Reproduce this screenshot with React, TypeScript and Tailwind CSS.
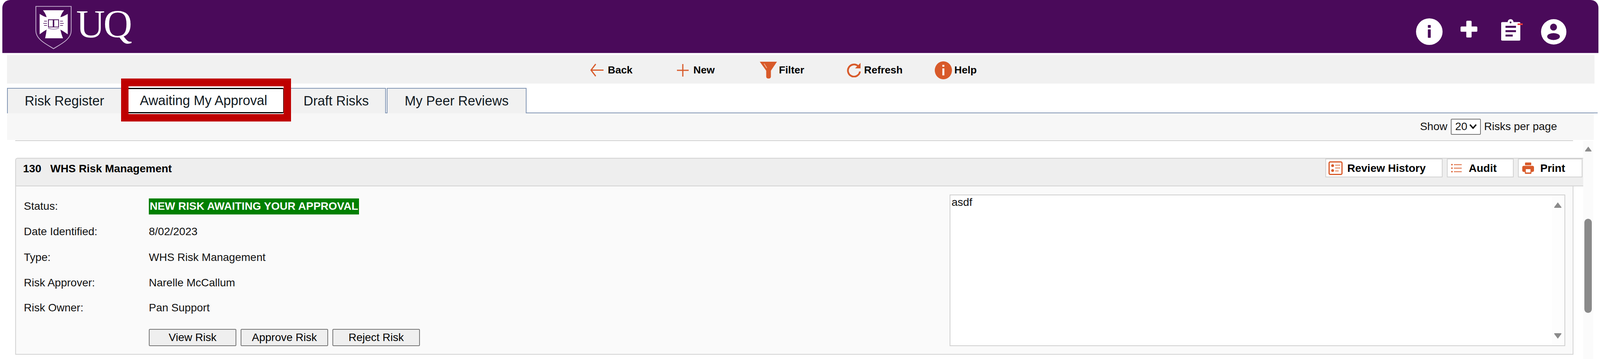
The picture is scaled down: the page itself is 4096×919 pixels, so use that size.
import type { ReactNode } from "react";

const ORANGE = "#d85a2a";
const PURPLE = "#4a0a5a";

// UQ crest: shield outline, cross and open book
function Crest() {
  return (
    <svg viewBox="0 0 100 119" className="w-[94px] h-[111px]">
      <path d="M1.5 1.5H98.5V68C98.5 92 70 105 50 117.5C30 105 1.5 92 1.5 68Z" fill="none" stroke="#cdb9d6" strokeWidth="2" />
      <path
        d="M21 12H79Q71 22 69 31Q78 29 89 22V78Q78 70 69 65Q71 76 76 89H27Q30 76 31 65Q22 70 12 78V22Q22 29 31 31Q29 22 21 12Z"
        fill="#fff"
      />
      <path d="M36 38H49V58H36ZM51 38H64V58H51Z" fill="#fff" stroke={PURPLE} strokeWidth="2" />
      <path d="M35 61Q50 67 65 61" fill="none" stroke="#a98bb6" strokeWidth="2.5" />
      <path d="M24 42H32M22 48H32M24 54H32M68 42H76M68 48H78M68 54H76" stroke={PURPLE} strokeWidth="1.6" />
    </svg>
  );
}

function InfoIcon() {
  return (
    <svg viewBox="0 0 24 24" className="w-[68px] h-[68px] mt-[47px]">
      <circle cx="12" cy="12" r="12" fill="#fff" />
      <rect x="10.7" y="6" width="2.6" height="2.6" rx="0.5" fill={PURPLE} />
      <rect x="10.7" y="10" width="2.6" height="7.6" rx="0.4" fill={PURPLE} />
    </svg>
  );
}

function PlusIcon() {
  return (
    <svg viewBox="0 0 24 24" className="w-[43px] h-[43px] mt-[53px]">
      <rect x="8.2" y="0" width="7.6" height="24" rx="1.6" fill="#fff" />
      <rect x="0" y="8.2" width="24" height="7.6" rx="1.6" fill="#fff" />
    </svg>
  );
}

function ClipboardIcon() {
  return (
    <div className="relative w-[49px] h-[55px] mt-[49px]">
      <svg viewBox="0 0 53 59" className="w-[49px] h-[55px]" preserveAspectRatio="none">
        <rect x="0" y="8" width="53" height="51" rx="3" fill="#fff" />
        <circle cx="26" cy="8" r="8" fill="#fff" />
        <circle cx="26" cy="9" r="2.6" fill={PURPLE} />
        <path d="M12 21H41M12 33H41M12 45H32" stroke={PURPLE} strokeWidth="5.5" />
      </svg>
      <div className="absolute left-[42px] top-[11px] w-[13px] h-[4px] bg-[#f03a3a]" />
    </div>
  );
}

function UserIcon() {
  return (
    <svg viewBox="0 0 70 70" className="w-[65px] h-[65px] mt-[49px]">
      <circle cx="35" cy="35" r="35" fill="#fff" />
      <circle cx="34.5" cy="22" r="9.5" fill={PURPLE} />
      <ellipse cx="34.5" cy="48" rx="17.5" ry="9.5" fill={PURPLE} />
    </svg>
  );
}

function BackIcon() {
  return (
    <svg viewBox="0 0 34 33" className="w-[34px] h-[33px]">
      <path d="M14 1L2 16.5L14 32M2 16.5H34" fill="none" stroke={ORANGE} strokeWidth="3" />
    </svg>
  );
}

function NewIcon() {
  return (
    <svg viewBox="0 0 30 32" className="w-[30px] h-[32px]">
      <path d="M15 0V32M0 16H30" stroke={ORANGE} strokeWidth="3" />
    </svg>
  );
}

function FilterIcon() {
  return (
    <svg viewBox="0 0 44 43" className="w-[44px] h-[43px]">
      <path d="M0 0H44L28.5 23V38Q28.5 43 22.5 43Q16.5 43 16.5 38V23Z" fill={ORANGE} />
      <path d="M11 5L18 16" stroke="#f3b79c" strokeWidth="2" />
    </svg>
  );
}

function RefreshIcon() {
  return (
    <svg viewBox="0 0 39 37" className="w-[39px] h-[37px]">
      <path d="M32 8.5A15.5 15.5 0 1 0 36.5 22" fill="none" stroke={ORANGE} strokeWidth="4.5" />
      <path d="M38 0V14H24Z" fill={ORANGE} />
    </svg>
  );
}

function HelpIcon() {
  return (
    <svg viewBox="0 0 44 46" className="w-[44px] h-[46px]">
      <ellipse cx="22" cy="23" rx="22" ry="23" fill={ORANGE} />
      <rect x="19.5" y="9" width="5" height="5" fill="#fff" />
      <rect x="19.5" y="18" width="5" height="18" fill="#fff" />
    </svg>
  );
}

function ReviewIcon() {
  return (
    <svg viewBox="0 0 36 35" className="w-[36px] h-[35px] mr-[12px]">
      <rect x="1.5" y="1.5" width="33" height="32" rx="3" fill="#fff" stroke={ORANGE} strokeWidth="3" />
      <circle cx="10.5" cy="11" r="3.6" fill={ORANGE} />
      <circle cx="10.5" cy="23.5" r="3.6" fill={ORANGE} />
      <path d="M17 10H30M17 17H30M17 24.5H26" stroke="#eaa98c" strokeWidth="3.5" />
    </svg>
  );
}

function AuditIcon() {
  return (
    <svg viewBox="0 0 27 23" className="w-[27px] h-[23px] mr-[18px]">
      <circle cx="2" cy="2.5" r="2" fill={ORANGE} />
      <circle cx="2" cy="11.5" r="2" fill={ORANGE} />
      <circle cx="2" cy="20.5" r="2" fill={ORANGE} />
      <path d="M7 2.5H27M7 11.5H27M7 20.5H27" stroke="#e27f58" strokeWidth="2.6" />
    </svg>
  );
}

function PrintIcon() {
  return (
    <svg viewBox="0 0 30 29" className="w-[30px] h-[29px] mr-[16px]">
      <rect x="7" y="0" width="16" height="7" rx="1.5" fill={ORANGE} />
      <path d="M4 8.5H26Q30 8.5 30 12.5V20Q30 24 26 24H4Q0 24 0 20V12.5Q0 8.5 4 8.5Z" fill={ORANGE} />
      <path d="M6.5 17H23.5V27Q23.5 29 21.5 29H8.5Q6.5 29 6.5 27Z" fill={ORANGE} />
      <rect x="9" y="17" width="12" height="8.5" fill="#fff" />
    </svg>
  );
}

function UpArrow({ className }: { className: string }) {
  return (
    <svg viewBox="0 0 20 16" className={className}>
      <path d="M10 1L19 13Q20 15 18 15H2Q0 15 1 13Z" fill="#8a8a8a" />
    </svg>
  );
}

function DownArrow({ className }: { className: string }) {
  return (
    <svg viewBox="0 0 20 16" className={className}>
      <path d="M10 15L19 3Q20 1 18 1H2Q0 1 1 3Z" fill="#8a8a8a" />
    </svg>
  );
}

function ToolItem({ icon, label, className, gap }: { icon: ReactNode; label: string; className: string; gap: string }) {
  return (
    <div className={`flex items-center ${className} ${gap}`}>
      {icon}
      <span className="text-[26.5px] font-bold text-black leading-none">{label}</span>
    </div>
  );
}

function PanelButton({ icon, label, className }: { icon: ReactNode; label: string; className: string }) {
  return (
    <div className={`flex items-center h-[48px] bg-white border-2 border-[#d2d2d2] ${className}`}>
      {icon}
      <span className="pt-[2px] text-[28px] font-bold text-black leading-none">{label}</span>
    </div>
  );
}

function Row({ label, className, children }: { label: string; className: string; children: ReactNode }) {
  return (
    <div className={`flex items-center text-[28px] text-[#111] ${className}`}>
      <span className="w-[320px]">{label}</span>
      {children}
    </div>
  );
}

function ActionButton({ label }: { label: string }) {
  return (
    <button className="w-[224px] h-[44px] rounded-[3px] border-2 border-[#767676] bg-[#efefef] text-[28px] leading-none text-black">
      {label}
    </button>
  );
}

export default function App() {
  return (
    <div className="w-[4096px] h-[919px] overflow-hidden bg-white font-['Liberation_Sans',Arial,sans-serif]">
      {/* purple banner */}
      <div className="flex ml-[6px] mr-[4px] h-[136px] rounded-t-[20px] bg-[#4a0a5a] border-b border-[#8a5f98]">
        <div className="flex ml-[84px] mt-[15px] h-[111px]">
          <Crest />
          <span className="ml-[11px] -mt-[16px] text-[102px] leading-[126px] tracking-[-4px] text-white font-['Liberation_Serif',serif]">UQ</span>
        </div>
        <div className="flex ml-auto mr-[82px]">
          <InfoIcon />
          <div className="ml-[46px]"><PlusIcon /></div>
          <div className="ml-[61px]"><ClipboardIcon /></div>
          <div className="ml-[53px]"><UserIcon /></div>
        </div>
      </div>

      {/* toolbar */}
      <div className="flex items-center mt-[5px] ml-[18px] mr-[14px] h-[73px] pl-[1493px] pt-[4px] bg-[#f1f1f1]">
        <ToolItem icon={<BackIcon />} label="Back" className="w-[222px]" gap="gap-[11px]" />
        <ToolItem icon={<NewIcon />} label="New" className="w-[212px]" gap="gap-[12px]" />
        <ToolItem icon={<FilterIcon />} label="Filter" className="w-[220px]" gap="gap-[5px]" />
        <ToolItem icon={<RefreshIcon />} label="Refresh" className="w-[228px]" gap="gap-[8px]" />
        <ToolItem icon={<HelpIcon />} label="Help" className="w-[120px]" gap="gap-[6px]" />
      </div>

      {/* tabs */}
      <div className="flex items-end h-[76px] ml-[18px] mr-[6px] border-b-2 border-[#8296b4] text-[34.2px] text-[#111a22]">
        <div className="flex items-center justify-center w-[292px] h-[65px] -mb-[2px] bg-[#f1f1f1] border-l-2 border-t-2 border-[#8296b4]">Risk Register</div>
        <div className="relative w-[435px] h-[65px] -mb-[2px]">
          {/* red highlight around the active tab */}
          <div className="absolute left-0 right-0 -top-[24px] -bottom-[21px] bg-white border-x-[19px] border-t-[20px] border-b-[19px] border-[#bf0000]" />
          <div className="relative flex items-center h-full mx-[19px] pl-[29px] border-y-[3px] border-r border-black rounded-r-[3px]">Awaiting My Approval</div>
        </div>
        <div className="flex items-center w-[243px] h-[65px] -mb-[2px] pl-[32px] bg-[#f1f1f1] border-t-2 border-r-2 border-[#8296b4]">Draft Risks</div>
        <div className="flex items-center justify-center w-[358px] h-[65px] -mb-[2px] ml-[2px] bg-[#f1f1f1] border-x-2 border-t-2 border-[#8296b4]">My Peer Reviews</div>
      </div>

      {/* page size row */}
      <div className="flex items-center justify-end ml-[18px] mr-[16px] h-[68px] pr-[94px] bg-[#f7f7f7] text-[28px] text-[#111]">
        <span>Show</span>
        <div className="flex items-center justify-between w-[77px] h-[41px] ml-[9px] mr-[8px] pl-[9px] pr-[8px] bg-white border-2 border-[#767676] rounded-[3px]">
          <span>20</span>
          <svg viewBox="0 0 20 14" className="w-[20px] h-[14px]">
            <path d="M2 2L10 11L18 2" fill="none" stroke="#111" strokeWidth="3.5" />
          </svg>
        </div>
        <span>Risks per page</span>
      </div>
      <div className="ml-[39px] w-[3988px] h-[2px] mt-[1px] bg-[#cfcfcf]" />

      {/* risk panel and page scrollbar */}
      <div className="flex">
        <div className="ml-[39px] mt-[43px] w-[4014px]">
          <div className="flex justify-between h-[73px] pr-[2px] pt-[2px] bg-[#eeeeee] border-t-2 border-l-2 border-b-2 border-[#d2d2d2] rounded-tl-[6px]">
            <div className="flex gap-[23px] pl-[18px] pt-[8px] text-[28px] font-bold leading-[32px] text-black">
              <span>130</span>
              <span>WHS Risk Management</span>
            </div>
            <div className="flex gap-[11px] -mt-[2px]">
              <PanelButton icon={<ReviewIcon />} label="Review History" className="w-[300px] pl-[6px]" />
              <PanelButton icon={<AuditIcon />} label="Audit" className="w-[171px] pl-[9px]" />
              <PanelButton icon={<PrintIcon />} label="Print" className="w-[165px] pl-[9px]" />
            </div>
          </div>
          <div className="flex justify-between w-[3989px] h-[431px] pl-[20px] pr-[19px] pt-[19px] bg-[#fafafa] border-x-2 border-b-2 border-[#d2d2d2]">
            <div>
              <Row label="Status:" className="h-[64px]">
                <span className="flex items-center justify-center w-[538px] h-[41px] bg-[#008000] text-white font-bold leading-none">NEW RISK AWAITING YOUR APPROVAL</span>
              </Row>
              <Row label="Date Identified:" className="h-[66px]">8/02/2023</Row>
              <Row label="Type:" className="h-[66px]">WHS Risk Management</Row>
              <Row label="Risk Approver:" className="h-[63px]">Narelle McCallum</Row>
              <Row label="Risk Owner:" className="h-[65px]">Pan Support</Row>
              <div className="flex gap-[11px] ml-[320px] mt-[22px]">
                <ActionButton label="View Risk" />
                <ActionButton label="Approve Risk" />
                <ActionButton label="Reject Risk" />
              </div>
            </div>
            <div className="flex justify-between w-[1576px] h-[388px] mt-[2px] bg-white border-2 border-[#cfcfcf]">
              <span className="pl-[3px] pt-[2px] text-[28px] leading-[32px] text-[#111]">asdf</span>
              <div className="flex flex-col justify-between w-[32px] h-full pt-[17px] pb-[16px] bg-[#fdfdfd]">
                <UpArrow className="w-[20px] h-[16px] ml-[5px]" />
                <DownArrow className="w-[20px] h-[16px] ml-[5px]" />
              </div>
            </div>
          </div>
        </div>
        <div className="w-[26px] pl-[3px] h-[560px] bg-[#fbfbfb]">
          <UpArrow className="w-[18px] h-[15px] mt-[13px] ml-[1px]" />
          <div className="w-[19px] h-[241px] mt-[171px] rounded-full bg-[#8a8a8a]" />
        </div>
      </div>
    </div>
  );
}
